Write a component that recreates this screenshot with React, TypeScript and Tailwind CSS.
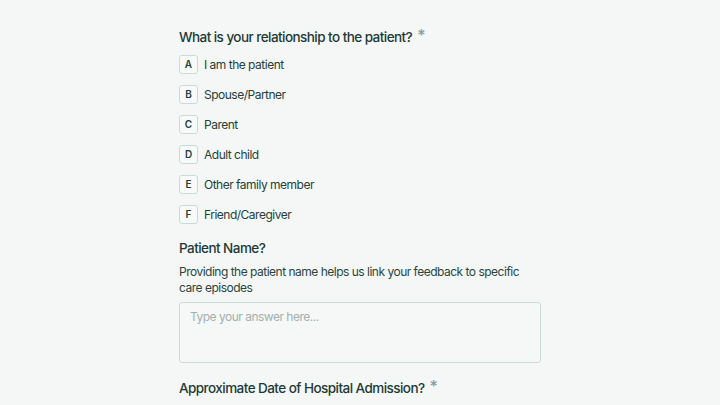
const options = [
  { key: "A", label: "I am the patient" },
  { key: "B", label: "Spouse/Partner" },
  { key: "C", label: "Parent" },
  { key: "D", label: "Adult child" },
  { key: "E", label: "Other family member" },
  { key: "F", label: "Friend/Caregiver" },
]

export default function App() {
  return (
    <div
      className="min-h-[405px] w-full bg-[#f4f7f6] text-[#1d3a36] overflow-hidden"
      style={{ fontFamily: "Inter, 'Noto Sans', sans-serif" }}
    >
      <div className="w-[362px] ml-[179px] pt-[27px]">
        <div className="text-[13.5px] tracking-[-0.55px] font-medium leading-[20px] flex items-start">
          What is your relationship to the patient?
          <span className="text-[#8a9c98] ml-[5px] text-[16px] leading-[16px]">*</span>
        </div>

        <div className="mt-[8px] flex flex-col gap-[11px]">
          {options.map((o) => (
            <div key={o.key} className="flex items-center h-[19px]">
              <div className="w-[19px] h-[19px] border border-[#c6dcd6] bg-[#f8faf9] rounded-[3px] flex items-center justify-center text-[10px] font-semibold text-[#243f3b]">
                {o.key}
              </div>
              <span className="ml-[6px] text-[12px] tracking-[-0.5px] text-[#243f3b]">{o.label}</span>
            </div>
          ))}
        </div>

        <div className="mt-[14px] text-[13.5px] tracking-[-0.55px] font-medium leading-[20px]">Patient Name?</div>
        <p className="mt-[6px] w-[345px] text-[12px] tracking-[-0.5px] leading-[16px] text-[#2a4541]">
          Providing the patient name helps us link your feedback to specific care episodes
        </p>
        <textarea
          placeholder="Type your answer here..."
          className="mt-[6px] w-[362px] h-[61px] block resize-none border border-[#c6dcd6] rounded-[3px] bg-[#f5f8f7] px-[10px] py-[5px] text-[12px] tracking-[-0.5px] placeholder:text-[#a3b0ad] outline-none"
        />

        <div className="mt-[15px] text-[13.5px] tracking-[-0.55px] font-medium leading-[20px] flex items-start">
          Approximate Date of Hospital Admission?
          <span className="text-[#8a9c98] ml-[5px] text-[16px] leading-[16px]">*</span>
        </div>
      </div>
    </div>
  )
}
